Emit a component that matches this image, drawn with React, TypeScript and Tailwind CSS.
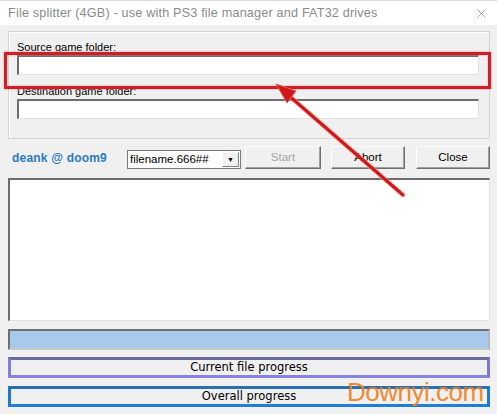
import React from 'react';
import { X } from 'lucide-react';

const sunken = 'border-t-[2px] border-l-[2px] border-t-[#6d6d6d] border-l-[#6d6d6d] border-b border-r border-b-[#e3e3e3] border-r-[#e3e3e3] bg-white';
const btn = 'h-[23px] flex items-center justify-center border border-t-white border-l-white border-b-[#6f6f6f] border-r-[#6f6f6f] bg-[#f0f0f0] shadow-[inset_-1px_-1px_0_#a0a0a0] text-[11.5px]';

const App: React.FC = () => {
  return (
    <div className="relative w-[497px] h-[414px] overflow-hidden bg-[#f0f0f0] text-black" style={{ fontFamily: '"Liberation Sans", Arial, sans-serif' }}>
      {/* Title bar */}
      <div className="h-[25px] bg-white flex items-center justify-between pl-[8px] pr-[8px] border-t border-t-[#d8d8d8]">
        <span className="text-[12.6px] text-[#8a8a8a] tracking-[0.2px]">
          File splitter (4GB) - use with PS3 file manager and FAT32 drives
        </span>
        <X size={15} strokeWidth={1} className="text-[#707070]" />
      </div>

      <div className="pl-[8px] pr-[7px]">
        {/* Group box */}
        <div className="mt-[6px] h-[108px] border border-[#d5d5d5] shadow-[inset_1px_1px_0_#ffffff] pt-[9px] pl-[8px] pr-[10px]">
          <div className="h-[13px] leading-[13px] text-[11px]">Source game folder:</div>
          <div className={`mt-[1px] h-[20px] ${sunken}`} />
          <div className="mt-[10px] h-[13px] leading-[13px] text-[11px]">Destination game folder:</div>
          <div className={`mt-[1px] h-[20px] ${sunken}`} />
        </div>

        {/* Controls row */}
        <div className="mt-[7px] h-[23px] flex items-center">
          <span className="ml-[4px] w-[114px] text-[12px] font-bold text-[#2a7ac2] tracking-[0.2px]">deank @ doom9</span>
          <div className="ml-[1px] mt-[3px] w-[114px] h-[19px] flex items-stretch border border-[#7a7a7a] bg-white">
            <span className="flex-1 pl-[2px] text-[11.5px] leading-[17px]">filename.666##</span>
            <span className="w-[17px] my-[1px] mr-[1px] flex items-center justify-center bg-[#f0f0f0] border border-t-white border-l-white border-b-[#808080] border-r-[#808080] text-[7px] leading-none">▼</span>
          </div>
          <div className={`ml-[4px] w-[76px] ${btn} text-[#a6a6a6]`}>Start</div>
          <div className={`ml-[10px] w-[74px] ${btn}`}>Abort</div>
          <div className={`ml-[11px] w-[74px] ${btn}`}>Close</div>
        </div>

        {/* Log area */}
        <div className={`mt-[9px] h-[143px] ${sunken}`} />

        {/* Progress bar */}
        <div className="mt-[8px] h-[21px] border-[2px] border-t-[#6f6f6f] border-l-[#6f6f6f] border-b-[#c8c8c8] border-r-[#b8b8b8] bg-[#a6c9ec]" />

        {/* Current file progress */}
        <div className="mt-[7px] h-[21px] flex items-center justify-center border-[3px] border-t-[#6a6a9c] border-l-[#7f7fdc] border-b-[#8585e0] border-r-[#7a7ad0] bg-[#f0f0f0] text-[11.5px]" style={{ fontFamily: '"DejaVu Sans", Verdana, sans-serif' }}>
          Current file progress
        </div>

        {/* Overall progress */}
        <div className="mt-[8px] h-[21px] flex items-center justify-center border-[3px] border-t-[#2a6fae] border-l-[#1f78d0] border-b-[#1f7fd6] border-r-[#1f78d0] bg-[#f0f0f0] text-[11.5px]" style={{ fontFamily: '"DejaVu Sans", Verdana, sans-serif' }}>
          Overall progress
        </div>
      </div>

      {/* Annotation: highlight box */}
      <div className="absolute left-[4px] top-[52px] w-[487px] h-[37px] border-[3px] border-[#cf1f26] shadow-[0_0_2px_#e88a8a,inset_0_0_2px_#e88a8a]" />

      {/* Annotation: arrow */}
      <svg className="absolute left-0 top-0 pointer-events-none" width="497" height="414" viewBox="0 0 497 414">
        <line x1="403" y1="195" x2="287" y2="94" stroke="#f0a0a0" strokeWidth="5" strokeLinecap="round" opacity="0.6" />
        <line x1="403" y1="195" x2="287" y2="94" stroke="#d01818" strokeWidth="3" strokeLinecap="round" />
        <polygon points="276,84 296,91 287,103" fill="#d01818" stroke="#e06060" strokeWidth="1" strokeLinejoin="round" />
      </svg>

      {/* Watermark */}
      <div className="absolute left-[347px] top-[377px] text-[26px] leading-[30px] text-[#f07f1a] opacity-90 tracking-[-0.5px]">
        Downyi.com
      </div>
    </div>
  );
};

export default App;
